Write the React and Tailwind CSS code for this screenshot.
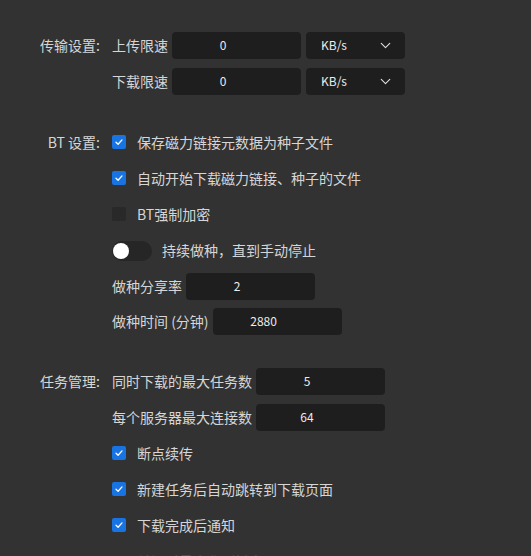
import { ChevronDown } from "lucide-react";

const font = { fontFamily: '"Noto Sans CJK SC", "Noto Sans", sans-serif' };

const Input = ({ value, className = "" }) => (
  <div
    className={`flex h-[27px] w-[129px] items-center justify-center rounded-[4px] bg-[#1e1e1f] pr-[27px] text-[12px] text-[#ececec] ${className}`}
  >
    {value}
  </div>
);

const Select = ({ value }) => (
  <div className="ml-[5px] flex h-[27px] w-[99px] items-center justify-between rounded-[4px] bg-[#1e1e1f] pl-[15px] pr-[11px] text-[12px] text-[#ececec]">
    <span>{value}</span>
    <ChevronDown size={17} strokeWidth={1.6} className="text-[#e0e0e0]" />
  </div>
);

const Check = ({ checked, label }) => (
  <div className="flex h-9 items-center">
    {checked ? (
      <span className="flex h-[14px] w-[14px] items-center justify-center rounded-[2px] bg-[#1874e3]">
        <svg width="10" height="10" viewBox="0 0 10 10" fill="none">
          <path d="M2 5.2 L4.1 7.2 L8 2.9" stroke="white" strokeWidth="1.3" strokeLinecap="round" strokeLinejoin="round" />
        </svg>
      </span>
    ) : (
      <span className="h-[14px] w-[14px] rounded-[2px] bg-[#292929]" />
    )}
    <span className="ml-[11px]">{label}</span>
  </div>
);

const Section = ({ title, children, className = "" }) => (
  <div className={`flex ${className}`}>
    <div className="flex h-9 w-[100px] shrink-0 items-center justify-end">{title}</div>
    <div className="ml-3 flex flex-col">{children}</div>
  </div>
);

export default function App() {
  return (
    <div
      style={font}
      className="relative h-[556px] w-[531px] overflow-hidden bg-[#323232] pt-[27px] text-[14px] text-[#d6d6d6]"
    >
      <Section title="传输设置:">
        <div className="flex h-9 items-center">
          <span className="mr-1">上传限速</span>
          <Input value="0" />
          <Select value="KB/s" />
        </div>
        <div className="flex h-9 items-center">
          <span className="mr-1">下载限速</span>
          <Input value="0" />
          <Select value="KB/s" />
        </div>
      </Section>

      <Section title="BT 设置:" className="mt-[25px]">
        <Check checked label="保存磁力链接元数据为种子文件" />
        <Check checked label="自动开始下载磁力链接、种子的文件" />
        <Check label="BT强制加密" />
        <div className="flex h-[37px] items-center">
          <span className="flex h-5 w-10 items-center rounded-full bg-[#262626] pl-[1px]">
            <span className="h-4 w-4 rounded-full bg-white" />
          </span>
          <span className="ml-[10px]">持续做种，直到手动停止</span>
        </div>
        <div className="flex h-[34px] items-center">
          <span className="mr-1">做种分享率</span>
          <Input value="2" />
        </div>
        <div className="flex h-9 items-center">
          <span className="mr-1">做种时间 (分钟)</span>
          <Input value="2880" />
        </div>
      </Section>

      <Section title="任务管理:" className="mt-6">
        <div className="flex h-9 items-center">
          <span className="mr-1">同时下载的最大任务数</span>
          <Input value="5" />
        </div>
        <div className="flex h-9 items-center">
          <span className="mr-1">每个服务器最大连接数</span>
          <Input value="64" />
        </div>
        <Check checked label="断点续传" />
        <Check checked label="新建任务后自动跳转到下载页面" />
        <Check checked label="下载完成后通知" />
        <div className="flex h-9 items-center opacity-20">
          <span className="h-[14px] w-[14px]" />
          <span className="ml-[11px]">关闭时最小化到托盘</span>
        </div>
      </Section>
    </div>
  );
}
